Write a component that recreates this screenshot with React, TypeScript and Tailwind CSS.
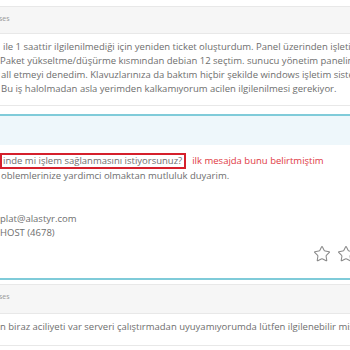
import { Star } from "lucide-react";

const FONT = { fontFamily: '"Open Sans", "Liberation Sans", sans-serif' };

function Header({ tall }: { tall?: boolean }) {
  return (
    <div
      className={
        "border-b border-[#e8e8e8] bg-[#f6f6f6] pt-[5px] text-[7px] text-[#999] " +
        (tall ? "h-[29px]" : "h-[27px]")
      }
    >
      <span className="-ml-[1px]">ses</span>
    </div>
  );
}

export default function App() {
  return (
    <div className="h-[350px] w-[350px] overflow-hidden bg-white text-[9.5px] leading-[14px] text-[#6e6e6e]" style={FONT}>
      {/* customer message */}
      <div className="mt-[6px] border-y border-[#e8e8e8]">
        <Header />
        <div className="whitespace-nowrap pb-[9px] pt-[6px]">
          <div className="pl-[3px]">ile 1 saattir ilgilenilmediği için yeniden ticket oluşturdum. Panel üzerinden işletim</div>
          <div className="pl-[0px]">Paket yükseltme/düşürme kısmından debian 12 seçtim. sunucu yönetim paneline</div>
          <div className="pl-[1px]">all etmeyi denedim. Klavuzlarınıza da baktım hiçbir şekilde windows işletim sistemi</div>
          <div className="pl-[1px]">Bu iş halolmadan asla yerimden kalkamıyorum acilen ilgilenilmesi gerekiyor.</div>
        </div>
      </div>

      {/* staff reply */}
      <div className="mt-[8px] border-b-2 border-t-2 border-[#7fcbd9]">
        <div className="h-[29px] bg-[#eef7fb]" />
        <div className="whitespace-nowrap pt-[8px]">
          <div className="flex items-center gap-[6px]">
            <span className="border-2 border-[#d5202c] pl-[1px] pr-[2px] leading-[12px]">inde mi işlem sağlanmasını istiyorsunuz?</span>
            <span className="text-[#e0393f]">ilk mesajda bunu belirtmiştim</span>
          </div>
          <div className="pl-[1px]">oblemlerinize yardimci olmaktan mutluluk duyarim.</div>
          <div className="mt-[29px] pl-[0px]">plat@alastyr.com</div>
          <div className="pl-[0px]">HOST (4678)</div>
          <div className="flex justify-end gap-[6px] pb-[15px] pt-[5px]">
            <Star size={18} strokeWidth={1.4} className="text-[#8a8a8a]" />
            <Star size={18} strokeWidth={1.4} className="-mr-[5px] text-[#8a8a8a]" />
          </div>
        </div>
      </div>

      {/* customer message 2 */}
      <div className="mt-[4px] border-y border-[#e8e8e8]">
        <Header tall />
        <div className="whitespace-nowrap pb-[11px] pt-[6px]">
          <div className="pl-[0px]">n biraz aciliyeti var serveri çalıştırmadan uyuyamıyorumda lütfen ilgilenebilir misiniz</div>
        </div>
      </div>
    </div>
  );
}
